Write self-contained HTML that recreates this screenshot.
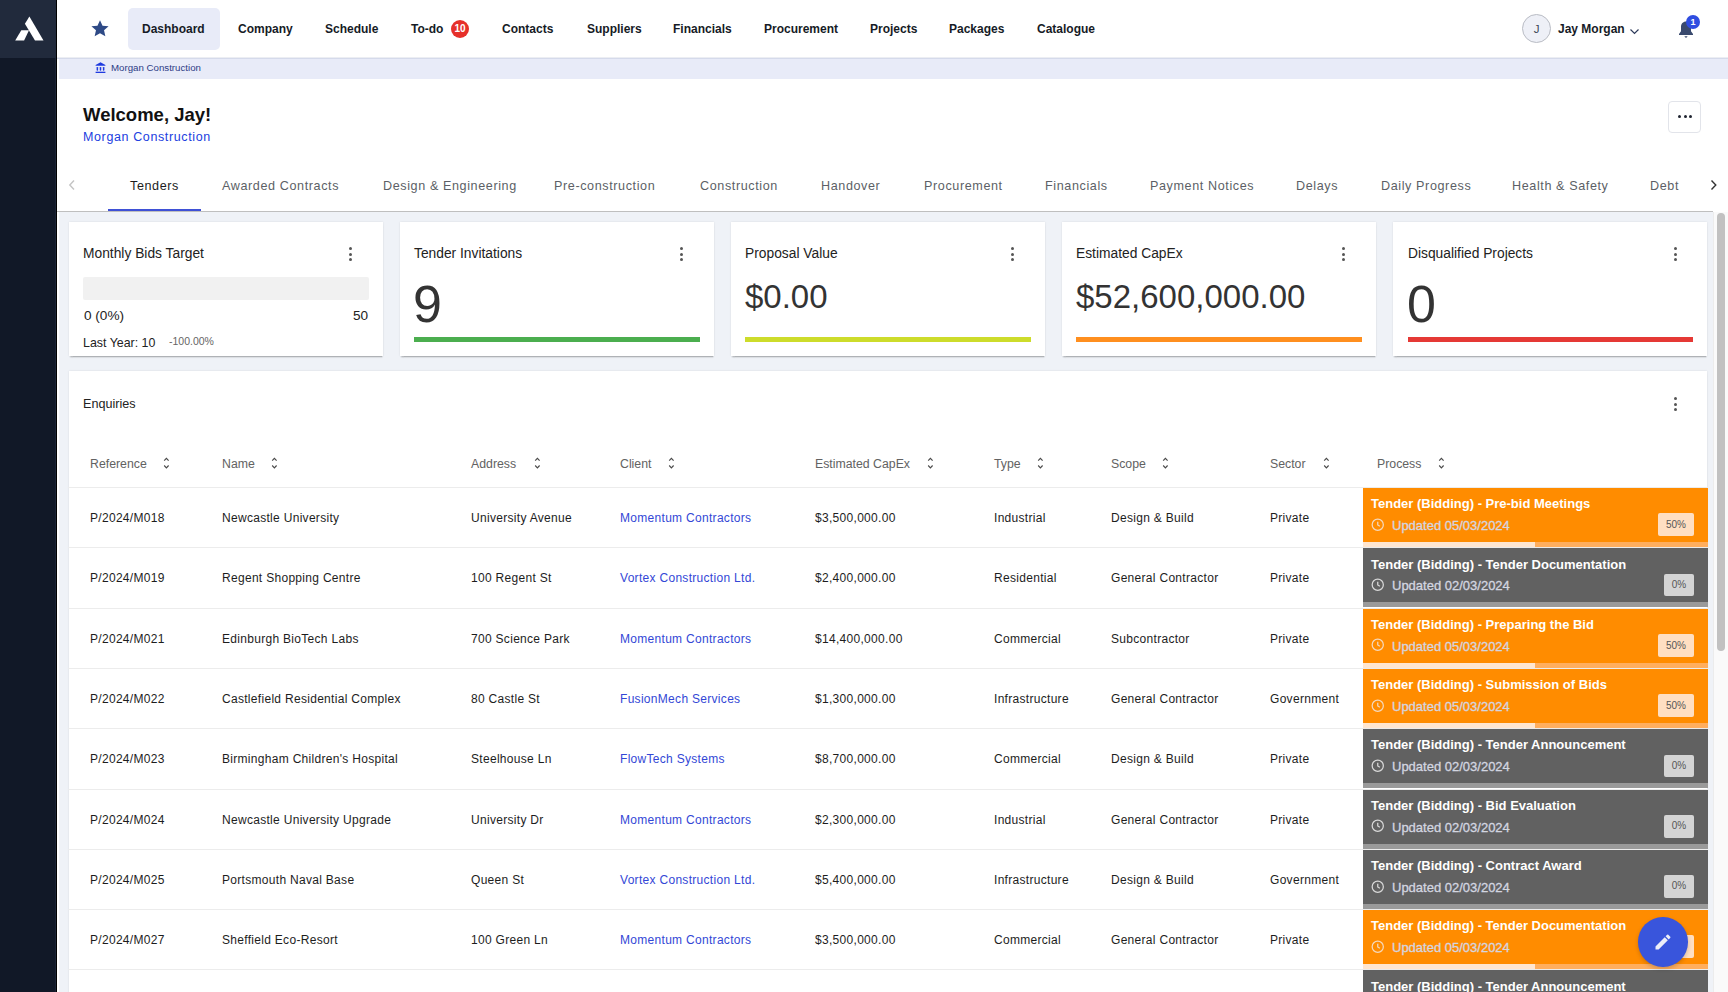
<!DOCTYPE html>
<html><head><meta charset="utf-8">
<style>
*{box-sizing:border-box;margin:0;padding:0}
html,body{width:1728px;height:992px;overflow:hidden;background:#fff;font-family:"Liberation Sans",sans-serif;color:#1a1a1a}
.a{position:absolute}
.side{left:0;top:0;width:56px;height:992px;background:#111827}
.sidetop{left:0;top:0;width:56px;height:58px;background:#212a3c}
.sideline{left:56px;top:0;width:1px;height:992px;background:#000}
.nav{font-size:12px;font-weight:700;color:#161b26;line-height:20px;white-space:nowrap;margin-top:1px}
.hdrb{left:57px;top:57px;width:1671px;height:2px;background:linear-gradient(#eceef3 0,#eceef3 50%,#d5daeb 50%)}
.crumb{left:59px;top:59px;width:1669px;height:20px;background:#e8ebf8}
.tab{font-size:12.6px;letter-spacing:0.6px;color:#5c5f66;line-height:20px;white-space:nowrap;top:175.5px}
.gray{left:59px;top:212px;width:1654px;height:780px;background:#eff2f7}
.card{background:#fff;box-shadow:0 2px 1.5px -0.5px rgba(0,0,0,.24),0 0 2px rgba(0,0,0,.1)}
.ct{font-size:13.8px;color:#222;line-height:20px;white-space:nowrap}
.dots{width:3px;height:14px}
.dots i{display:block;width:3px;height:3px;border-radius:50%;background:#555;margin-bottom:2.5px}
.big{color:#333;white-space:nowrap;line-height:1}
.th{font-size:12.3px;color:#626262;line-height:20px;white-space:nowrap}
.td{font-size:12px;letter-spacing:0.3px;color:#1d1d1d;line-height:20px;white-space:nowrap}
.lnk{color:#3347d6}
.rowb{left:68px;width:1640px;height:1px;background:#ececec}
.pc{left:1363px;width:345px;height:54px}
.pc.o{background:#ff8c00}
.pc.g{background:#616161}
.pbar{left:1363px;width:345px;height:5.2px}
.pt{left:8px;top:7.3px;font-size:13px;font-weight:700;color:#fff;line-height:18px;white-space:nowrap}
.pu{left:29px;top:29px;font-size:13px;color:#d3d6e0;-webkit-text-stroke:0.3px #d3d6e0;line-height:18px;white-space:nowrap}
.clk{left:7.5px;top:29.8px;width:13.5px;height:13.5px}
.pct{font-size:10px;color:#555;line-height:21px;text-align:center;border-radius:2px}
</style></head><body>
<div class="a side"></div>
<div class="a sidetop"></div>
<div class="a sideline"></div><div class="a" style="left:55px;top:58px;width:1px;height:934px;background:#1b2436"></div>
<svg class="a" style="left:0;top:0" width="56" height="58" viewBox="0 0 56 58">
<polygon points="29.4,16.5 43.5,40.6 35,40.6 24.9,23.7" fill="#fff"/>
<polygon points="21.3,30.2 29,30.2 24.1,40.6 15.2,40.6" fill="#fff"/>
</svg>

<!-- top nav -->
<svg class="a" style="left:88.5px;top:17.5px" width="22" height="21" viewBox="0 0 24 24"><path d="M12 2.5l2.9 6.3 6.9.7-5.2 4.6 1.5 6.8L12 17.4l-6.1 3.5 1.5-6.8L2.2 9.5l6.9-.7z" fill="#2e4a86"/></svg>
<div class="a" style="left:128px;top:8px;width:92px;height:41.5px;background:#e8ebf8;border-radius:5px"></div>
<div class="a nav" style="left:142px;top:18px">Dashboard</div>
<div class="a nav" style="left:238px;top:18px">Company</div>
<div class="a nav" style="left:325px;top:18px">Schedule</div>
<div class="a nav" style="left:411px;top:18px">To-do</div>
<div class="a" style="left:451px;top:20px;width:18px;height:18px;border-radius:50%;background:#e6302a;color:#fff;font-size:10px;font-weight:700;text-align:center;line-height:18px">10</div>
<div class="a nav" style="left:502px;top:18px">Contacts</div>
<div class="a nav" style="left:587px;top:18px">Suppliers</div>
<div class="a nav" style="left:673px;top:18px">Financials</div>
<div class="a nav" style="left:764px;top:18px">Procurement</div>
<div class="a nav" style="left:870px;top:18px">Projects</div>
<div class="a nav" style="left:949px;top:18px">Packages</div>
<div class="a nav" style="left:1037px;top:18px">Catalogue</div>

<div class="a" style="left:1522px;top:14px;width:29px;height:29px;border-radius:50%;border:1px solid #b9bcc4;background:#eef0f7;color:#3b4656;font-size:11.5px;text-align:center;line-height:28px">J</div>
<div class="a nav" style="left:1558px;top:18px">Jay Morgan</div>
<svg class="a" style="left:1629px;top:28px" width="11" height="8" viewBox="0 0 11 8"><path d="M1.5 1.5l4 4 4-4" stroke="#2d3a5a" stroke-width="1.15" fill="none"/></svg>
<svg class="a" style="left:1677px;top:19px" width="18" height="20" viewBox="0 0 18 20"><path d="M9 2.5c-3 0-5 2.3-5 5.2v4.5L2 15v1h14v-1l-2-2.8V7.7c0-2.9-2-5.2-5-5.2z" fill="#3a4a6e"/><path d="M7.3 17.2h3.4L9 19z" fill="#3a4a6e"/></svg>
<div class="a" style="left:1686px;top:14.7px;width:14px;height:14px;border-radius:50%;background:#2f4de0;color:#fff;font-size:9px;font-weight:700;text-align:center;line-height:14px">1</div>

<div class="a hdrb"></div>
<div class="a crumb"></div>
<svg class="a" style="left:94px;top:61.3px" width="13" height="13" viewBox="0 0 13 13"><path d="M6.5 1.3L1.6 3.9v0.9h9.8V3.9z" fill="#1f3be0"/><rect x="2.6" y="5.9" width="1.5" height="3.8" rx="0.7" fill="#1f3be0"/><rect x="5.75" y="5.9" width="1.5" height="3.8" rx="0.7" fill="#1f3be0"/><rect x="8.9" y="5.9" width="1.5" height="3.8" rx="0.7" fill="#1f3be0"/><rect x="1.6" y="10.7" width="9.8" height="1.3" fill="#1f3be0"/></svg>
<div class="a" style="left:111px;top:61px;font-size:9.7px;color:#2e3c86;line-height:14px;white-space:nowrap">Morgan Construction</div>

<div class="a" style="left:83px;top:102.7px;font-size:18.5px;font-weight:700;color:#111;line-height:24px;white-space:nowrap">Welcome, Jay!</div>
<div class="a" style="left:83px;top:127.7px;font-size:12.5px;letter-spacing:0.62px;color:#2140e0;line-height:18px;white-space:nowrap">Morgan Construction</div>
<div class="a" style="left:1668px;top:101px;width:33px;height:32px;border:1px solid #e2e4ea;border-radius:4px"></div>
<div class="a" style="left:1678px;top:114.5px;width:3.4px;height:3.4px;border-radius:50%;background:#1f2430"></div>
<div class="a" style="left:1683.5px;top:114.5px;width:3.4px;height:3.4px;border-radius:50%;background:#1f2430"></div>
<div class="a" style="left:1689px;top:114.5px;width:3.4px;height:3.4px;border-radius:50%;background:#1f2430"></div>

<!-- tabs -->
<svg class="a" style="left:67px;top:179px" width="10" height="12" viewBox="0 0 10 12"><path d="M7 1.5L2.8 6 7 10.5" stroke="#c4c4c4" stroke-width="1.4" fill="none"/></svg>
<div class="a tab" style="left:130px;color:#1c1c1c">Tenders</div>
<div class="a tab" style="left:222px">Awarded Contracts</div>
<div class="a tab" style="left:383px">Design &amp; Engineering</div>
<div class="a tab" style="left:554px">Pre-construction</div>
<div class="a tab" style="left:700px">Construction</div>
<div class="a tab" style="left:821px">Handover</div>
<div class="a tab" style="left:924px">Procurement</div>
<div class="a tab" style="left:1045px">Financials</div>
<div class="a tab" style="left:1150px">Payment Notices</div>
<div class="a tab" style="left:1296px">Delays</div>
<div class="a tab" style="left:1381px">Daily Progress</div>
<div class="a tab" style="left:1512px">Health &amp; Safety</div>
<div class="a" style="left:1650px;top:165px;width:28.5px;height:40px;overflow:hidden"><div class="a tab" style="left:0;top:11px">Debt</div></div>
<svg class="a" style="left:1708px;top:179px" width="12" height="12" viewBox="0 0 12 12"><path d="M3.5 1.5L7.8 6 3.5 10.5" stroke="#333" stroke-width="1.4" fill="none"/></svg>
<div class="a" style="left:57px;top:211px;width:1656px;height:1px;background:#bfbfbf"></div>
<div class="a" style="left:108px;top:209px;width:93px;height:2px;background:#3f51d6"></div>

<div class="a gray"></div>
<!-- scrollbar -->
<div class="a" style="left:1713px;top:212px;width:15px;height:780px;background:#fafafa;border-left:1px solid #ececec"></div>
<div class="a" style="left:1717px;top:213px;width:8px;height:438px;border-radius:4px;background:#c1c1c1"></div>

<!-- cards -->
<div class="a card" style="left:68.7px;top:222px;width:314.4px;height:134px"></div>
<div class="a card" style="left:399.8px;top:222px;width:314.4px;height:134px"></div>
<div class="a card" style="left:730.9px;top:222px;width:314.4px;height:134px"></div>
<div class="a card" style="left:1062px;top:222px;width:314.4px;height:134px"></div>
<div class="a card" style="left:1393.1px;top:222px;width:314.4px;height:134px"></div>

<div class="a ct" style="left:83px;top:244px">Monthly Bids Target</div>
<div class="a dots" style="left:349px;top:247px"><i></i><i></i><i></i></div>
<div class="a" style="left:83px;top:277px;width:286px;height:23px;background:#f1f1f1;border-radius:2px"></div>
<div class="a ct" style="left:84px;top:306px;font-size:13.6px">0 (0%)</div>
<div class="a ct" style="left:353px;top:306px;font-size:13.6px">50</div>
<div class="a ct" style="left:83px;top:333px;font-size:12.4px">Last Year: 10</div>
<div class="a" style="left:169px;top:335px;font-size:10.5px;color:#666;line-height:12px;white-space:nowrap">-100.00%</div>

<div class="a ct" style="left:414px;top:244px">Tender Invitations</div>
<div class="a dots" style="left:680px;top:247px"><i></i><i></i><i></i></div>
<div class="a big" style="left:413px;top:278px;font-size:52px">9</div>
<div class="a" style="left:414px;top:337px;width:286px;height:5px;background:#4bae4f"></div>

<div class="a ct" style="left:745px;top:244px">Proposal Value</div>
<div class="a dots" style="left:1011px;top:247px"><i></i><i></i><i></i></div>
<div class="a big" style="left:745px;top:280px;font-size:33px">$0.00</div>
<div class="a" style="left:745px;top:337px;width:286px;height:5px;background:#cddc2b"></div>

<div class="a ct" style="left:1076px;top:244px">Estimated CapEx</div>
<div class="a dots" style="left:1342px;top:247px"><i></i><i></i><i></i></div>
<div class="a big" style="left:1076px;top:280px;font-size:33px">$52,600,000.00</div>
<div class="a" style="left:1076px;top:337px;width:286px;height:5px;background:#ff8f1f"></div>

<div class="a ct" style="left:1408px;top:244px">Disqualified Projects</div>
<div class="a dots" style="left:1674px;top:247px"><i></i><i></i><i></i></div>
<div class="a big" style="left:1407px;top:278px;font-size:52px">0</div>
<div class="a" style="left:1408px;top:337px;width:285px;height:5px;background:#e53935"></div>

<!-- enquiries -->
<div class="a card" style="left:68.7px;top:371px;width:1638.8px;height:640px"></div>
<div class="a ct" style="left:83px;top:394px;font-size:12.6px">Enquiries</div>
<div class="a dots" style="left:1674px;top:397px"><i></i><i></i><i></i></div>

<div id="tbl"><div class="a th" style="left:90px;top:454px">Reference</div>
<svg class="a" style="left:163px;top:457px" width="8" height="13" viewBox="0 0 8 13"><path d="M1.2 3.6L3.4 1.3 5.6 3.6M1.2 8.5L3.4 10.9 5.6 8.5" stroke="#4a4a4a" stroke-width="1.15" fill="none"/></svg>
<div class="a th" style="left:222px;top:454px">Name</div>
<svg class="a" style="left:271px;top:457px" width="8" height="13" viewBox="0 0 8 13"><path d="M1.2 3.6L3.4 1.3 5.6 3.6M1.2 8.5L3.4 10.9 5.6 8.5" stroke="#4a4a4a" stroke-width="1.15" fill="none"/></svg>
<div class="a th" style="left:471px;top:454px">Address</div>
<svg class="a" style="left:534px;top:457px" width="8" height="13" viewBox="0 0 8 13"><path d="M1.2 3.6L3.4 1.3 5.6 3.6M1.2 8.5L3.4 10.9 5.6 8.5" stroke="#4a4a4a" stroke-width="1.15" fill="none"/></svg>
<div class="a th" style="left:620px;top:454px">Client</div>
<svg class="a" style="left:668px;top:457px" width="8" height="13" viewBox="0 0 8 13"><path d="M1.2 3.6L3.4 1.3 5.6 3.6M1.2 8.5L3.4 10.9 5.6 8.5" stroke="#4a4a4a" stroke-width="1.15" fill="none"/></svg>
<div class="a th" style="left:815px;top:454px">Estimated CapEx</div>
<svg class="a" style="left:927px;top:457px" width="8" height="13" viewBox="0 0 8 13"><path d="M1.2 3.6L3.4 1.3 5.6 3.6M1.2 8.5L3.4 10.9 5.6 8.5" stroke="#4a4a4a" stroke-width="1.15" fill="none"/></svg>
<div class="a th" style="left:994px;top:454px">Type</div>
<svg class="a" style="left:1037px;top:457px" width="8" height="13" viewBox="0 0 8 13"><path d="M1.2 3.6L3.4 1.3 5.6 3.6M1.2 8.5L3.4 10.9 5.6 8.5" stroke="#4a4a4a" stroke-width="1.15" fill="none"/></svg>
<div class="a th" style="left:1111px;top:454px">Scope</div>
<svg class="a" style="left:1162px;top:457px" width="8" height="13" viewBox="0 0 8 13"><path d="M1.2 3.6L3.4 1.3 5.6 3.6M1.2 8.5L3.4 10.9 5.6 8.5" stroke="#4a4a4a" stroke-width="1.15" fill="none"/></svg>
<div class="a th" style="left:1270px;top:454px">Sector</div>
<svg class="a" style="left:1323px;top:457px" width="8" height="13" viewBox="0 0 8 13"><path d="M1.2 3.6L3.4 1.3 5.6 3.6M1.2 8.5L3.4 10.9 5.6 8.5" stroke="#4a4a4a" stroke-width="1.15" fill="none"/></svg>
<div class="a th" style="left:1377px;top:454px">Process</div>
<svg class="a" style="left:1438px;top:457px" width="8" height="13" viewBox="0 0 8 13"><path d="M1.2 3.6L3.4 1.3 5.6 3.6M1.2 8.5L3.4 10.9 5.6 8.5" stroke="#4a4a4a" stroke-width="1.15" fill="none"/></svg>
<div class="a rowb" style="top:487.0px"></div>
<div class="a td" style="left:90px;top:508.0px">P/2024/M018</div>
<div class="a td" style="left:222px;top:508.0px">Newcastle University</div>
<div class="a td" style="left:471px;top:508.0px">University Avenue</div>
<div class="a td lnk" style="left:620px;top:508.0px">Momentum Contractors</div>
<div class="a td" style="left:815px;top:508.0px">$3,500,000.00</div>
<div class="a td" style="left:994px;top:508.0px">Industrial</div>
<div class="a td" style="left:1111px;top:508.0px">Design &amp; Build</div>
<div class="a td" style="left:1270px;top:508.0px">Private</div>
<div class="a rowb" style="top:547.3px"></div>
<div class="a pc o" style="top:488.0px">
<div class="a pt">Tender (Bidding) - Pre-bid Meetings</div>
<svg class="a clk" viewBox="0 0 14 14"><circle cx="7" cy="7" r="5.8" stroke="#f5d9bd" stroke-width="1.3" fill="none"/><path d="M7 3.8V7.2l2.2 1.4" stroke="#f5d9bd" stroke-width="1.3" fill="none"/></svg>
<div class="a pu">Updated 05/03/2024</div>
<div class="a pct" style="left:295px;top:25px;width:36px;height:23px;line-height:23px;background:#ffdfc2">50%</div>
</div>
<div class="a pbar" style="top:542.0px;background:#ffae5e"></div><div class="a" style="left:1363px;top:542.0px;width:172px;height:5.2px;background:#ffe6d0"></div>
<div class="a td" style="left:90px;top:568.3px">P/2024/M019</div>
<div class="a td" style="left:222px;top:568.3px">Regent Shopping Centre</div>
<div class="a td" style="left:471px;top:568.3px">100 Regent St</div>
<div class="a td lnk" style="left:620px;top:568.3px">Vortex Construction Ltd.</div>
<div class="a td" style="left:815px;top:568.3px">$2,400,000.00</div>
<div class="a td" style="left:994px;top:568.3px">Residential</div>
<div class="a td" style="left:1111px;top:568.3px">General Contractor</div>
<div class="a td" style="left:1270px;top:568.3px">Private</div>
<div class="a rowb" style="top:607.6px"></div>
<div class="a pc g" style="top:548.3px">
<div class="a pt">Tender (Bidding) - Tender Documentation</div>
<svg class="a clk" viewBox="0 0 14 14"><circle cx="7" cy="7" r="5.8" stroke="#d9d9d9" stroke-width="1.3" fill="none"/><path d="M7 3.8V7.2l2.2 1.4" stroke="#d9d9d9" stroke-width="1.3" fill="none"/></svg>
<div class="a pu">Updated 02/03/2024</div>
<div class="a pct" style="left:301px;top:25.5px;width:30px;height:22.5px;line-height:22.5px;background:#d4d4d4">0%</div>
</div>
<div class="a pbar" style="top:602.3px;background:#9a9a9a"></div>
<div class="a td" style="left:90px;top:628.6px">P/2024/M021</div>
<div class="a td" style="left:222px;top:628.6px">Edinburgh BioTech Labs</div>
<div class="a td" style="left:471px;top:628.6px">700 Science Park</div>
<div class="a td lnk" style="left:620px;top:628.6px">Momentum Contractors</div>
<div class="a td" style="left:815px;top:628.6px">$14,400,000.00</div>
<div class="a td" style="left:994px;top:628.6px">Commercial</div>
<div class="a td" style="left:1111px;top:628.6px">Subcontractor</div>
<div class="a td" style="left:1270px;top:628.6px">Private</div>
<div class="a rowb" style="top:667.9px"></div>
<div class="a pc o" style="top:608.6px">
<div class="a pt">Tender (Bidding) - Preparing the Bid</div>
<svg class="a clk" viewBox="0 0 14 14"><circle cx="7" cy="7" r="5.8" stroke="#f5d9bd" stroke-width="1.3" fill="none"/><path d="M7 3.8V7.2l2.2 1.4" stroke="#f5d9bd" stroke-width="1.3" fill="none"/></svg>
<div class="a pu">Updated 05/03/2024</div>
<div class="a pct" style="left:295px;top:25px;width:36px;height:23px;line-height:23px;background:#ffdfc2">50%</div>
</div>
<div class="a pbar" style="top:662.6px;background:#ffae5e"></div><div class="a" style="left:1363px;top:662.6px;width:172px;height:5.2px;background:#ffe6d0"></div>
<div class="a td" style="left:90px;top:688.9px">P/2024/M022</div>
<div class="a td" style="left:222px;top:688.9px">Castlefield Residential Complex</div>
<div class="a td" style="left:471px;top:688.9px">80 Castle St</div>
<div class="a td lnk" style="left:620px;top:688.9px">FusionMech Services</div>
<div class="a td" style="left:815px;top:688.9px">$1,300,000.00</div>
<div class="a td" style="left:994px;top:688.9px">Infrastructure</div>
<div class="a td" style="left:1111px;top:688.9px">General Contractor</div>
<div class="a td" style="left:1270px;top:688.9px">Government</div>
<div class="a rowb" style="top:728.2px"></div>
<div class="a pc o" style="top:668.9px">
<div class="a pt">Tender (Bidding) - Submission of Bids</div>
<svg class="a clk" viewBox="0 0 14 14"><circle cx="7" cy="7" r="5.8" stroke="#f5d9bd" stroke-width="1.3" fill="none"/><path d="M7 3.8V7.2l2.2 1.4" stroke="#f5d9bd" stroke-width="1.3" fill="none"/></svg>
<div class="a pu">Updated 05/03/2024</div>
<div class="a pct" style="left:295px;top:25px;width:36px;height:23px;line-height:23px;background:#ffdfc2">50%</div>
</div>
<div class="a pbar" style="top:722.9px;background:#ffae5e"></div><div class="a" style="left:1363px;top:722.9px;width:172px;height:5.2px;background:#ffe6d0"></div>
<div class="a td" style="left:90px;top:749.2px">P/2024/M023</div>
<div class="a td" style="left:222px;top:749.2px">Birmingham Children's Hospital</div>
<div class="a td" style="left:471px;top:749.2px">Steelhouse Ln</div>
<div class="a td lnk" style="left:620px;top:749.2px">FlowTech Systems</div>
<div class="a td" style="left:815px;top:749.2px">$8,700,000.00</div>
<div class="a td" style="left:994px;top:749.2px">Commercial</div>
<div class="a td" style="left:1111px;top:749.2px">Design &amp; Build</div>
<div class="a td" style="left:1270px;top:749.2px">Private</div>
<div class="a rowb" style="top:788.5px"></div>
<div class="a pc g" style="top:729.2px">
<div class="a pt">Tender (Bidding) - Tender Announcement</div>
<svg class="a clk" viewBox="0 0 14 14"><circle cx="7" cy="7" r="5.8" stroke="#d9d9d9" stroke-width="1.3" fill="none"/><path d="M7 3.8V7.2l2.2 1.4" stroke="#d9d9d9" stroke-width="1.3" fill="none"/></svg>
<div class="a pu">Updated 02/03/2024</div>
<div class="a pct" style="left:301px;top:25.5px;width:30px;height:22.5px;line-height:22.5px;background:#d4d4d4">0%</div>
</div>
<div class="a pbar" style="top:783.2px;background:#9a9a9a"></div>
<div class="a td" style="left:90px;top:809.5px">P/2024/M024</div>
<div class="a td" style="left:222px;top:809.5px">Newcastle University Upgrade</div>
<div class="a td" style="left:471px;top:809.5px">University Dr</div>
<div class="a td lnk" style="left:620px;top:809.5px">Momentum Contractors</div>
<div class="a td" style="left:815px;top:809.5px">$2,300,000.00</div>
<div class="a td" style="left:994px;top:809.5px">Industrial</div>
<div class="a td" style="left:1111px;top:809.5px">General Contractor</div>
<div class="a td" style="left:1270px;top:809.5px">Private</div>
<div class="a rowb" style="top:848.8px"></div>
<div class="a pc g" style="top:789.5px">
<div class="a pt">Tender (Bidding) - Bid Evaluation</div>
<svg class="a clk" viewBox="0 0 14 14"><circle cx="7" cy="7" r="5.8" stroke="#d9d9d9" stroke-width="1.3" fill="none"/><path d="M7 3.8V7.2l2.2 1.4" stroke="#d9d9d9" stroke-width="1.3" fill="none"/></svg>
<div class="a pu">Updated 02/03/2024</div>
<div class="a pct" style="left:301px;top:25.5px;width:30px;height:22.5px;line-height:22.5px;background:#d4d4d4">0%</div>
</div>
<div class="a pbar" style="top:843.5px;background:#9a9a9a"></div>
<div class="a td" style="left:90px;top:869.8px">P/2024/M025</div>
<div class="a td" style="left:222px;top:869.8px">Portsmouth Naval Base</div>
<div class="a td" style="left:471px;top:869.8px">Queen St</div>
<div class="a td lnk" style="left:620px;top:869.8px">Vortex Construction Ltd.</div>
<div class="a td" style="left:815px;top:869.8px">$5,400,000.00</div>
<div class="a td" style="left:994px;top:869.8px">Infrastructure</div>
<div class="a td" style="left:1111px;top:869.8px">Design &amp; Build</div>
<div class="a td" style="left:1270px;top:869.8px">Government</div>
<div class="a rowb" style="top:909.1px"></div>
<div class="a pc g" style="top:849.8px">
<div class="a pt">Tender (Bidding) - Contract Award</div>
<svg class="a clk" viewBox="0 0 14 14"><circle cx="7" cy="7" r="5.8" stroke="#d9d9d9" stroke-width="1.3" fill="none"/><path d="M7 3.8V7.2l2.2 1.4" stroke="#d9d9d9" stroke-width="1.3" fill="none"/></svg>
<div class="a pu">Updated 02/03/2024</div>
<div class="a pct" style="left:301px;top:25.5px;width:30px;height:22.5px;line-height:22.5px;background:#d4d4d4">0%</div>
</div>
<div class="a pbar" style="top:903.8px;background:#9a9a9a"></div>
<div class="a td" style="left:90px;top:930.1px">P/2024/M027</div>
<div class="a td" style="left:222px;top:930.1px">Sheffield Eco-Resort</div>
<div class="a td" style="left:471px;top:930.1px">100 Green Ln</div>
<div class="a td lnk" style="left:620px;top:930.1px">Momentum Contractors</div>
<div class="a td" style="left:815px;top:930.1px">$3,500,000.00</div>
<div class="a td" style="left:994px;top:930.1px">Commercial</div>
<div class="a td" style="left:1111px;top:930.1px">General Contractor</div>
<div class="a td" style="left:1270px;top:930.1px">Private</div>
<div class="a rowb" style="top:969.4px"></div>
<div class="a pc o" style="top:910.1px">
<div class="a pt">Tender (Bidding) - Tender Documentation</div>
<svg class="a clk" viewBox="0 0 14 14"><circle cx="7" cy="7" r="5.8" stroke="#f5d9bd" stroke-width="1.3" fill="none"/><path d="M7 3.8V7.2l2.2 1.4" stroke="#f5d9bd" stroke-width="1.3" fill="none"/></svg>
<div class="a pu">Updated 05/03/2024</div>
<div class="a pct" style="left:295px;top:25px;width:36px;height:23px;line-height:23px;background:#ffdfc2">50%</div>
</div>
<div class="a pbar" style="top:964.1px;background:#ffae5e"></div><div class="a" style="left:1363px;top:964.1px;width:172px;height:5.2px;background:#ffe6d0"></div>
<div class="a pc g" style="top:970.4px">
<div class="a pt">Tender (Bidding) - Tender Announcement</div>
<svg class="a clk" viewBox="0 0 14 14"><circle cx="7" cy="7" r="5.8" stroke="#d9d9d9" stroke-width="1.3" fill="none"/><path d="M7 3.8V7.2l2.2 1.4" stroke="#d9d9d9" stroke-width="1.3" fill="none"/></svg>
<div class="a pu">Updated 02/03/2024</div>
<div class="a pct" style="left:301px;top:25.5px;width:30px;height:22.5px;line-height:22.5px;background:#d4d4d4">0%</div>
</div>
<div class="a pbar" style="top:1024.4px;background:#9a9a9a"></div>
<div class="a" style="left:1638px;top:917px;width:49.6px;height:49.6px;border-radius:50%;background:#3955dc;box-shadow:0 2px 4px rgba(0,0,0,.18)"></div>
<svg class="a" style="left:1653px;top:932px" width="20" height="20" viewBox="0 0 24 24"><path d="M3 17.25V21h3.75L17.81 9.94l-3.75-3.75L3 17.25zM20.71 7.04a1 1 0 000-1.41l-2.34-2.34a1 1 0 00-1.41 0l-1.83 1.83 3.75 3.75 1.83-1.83z" fill="#eceef8"/></svg></div><!--end-->
</body></html>
